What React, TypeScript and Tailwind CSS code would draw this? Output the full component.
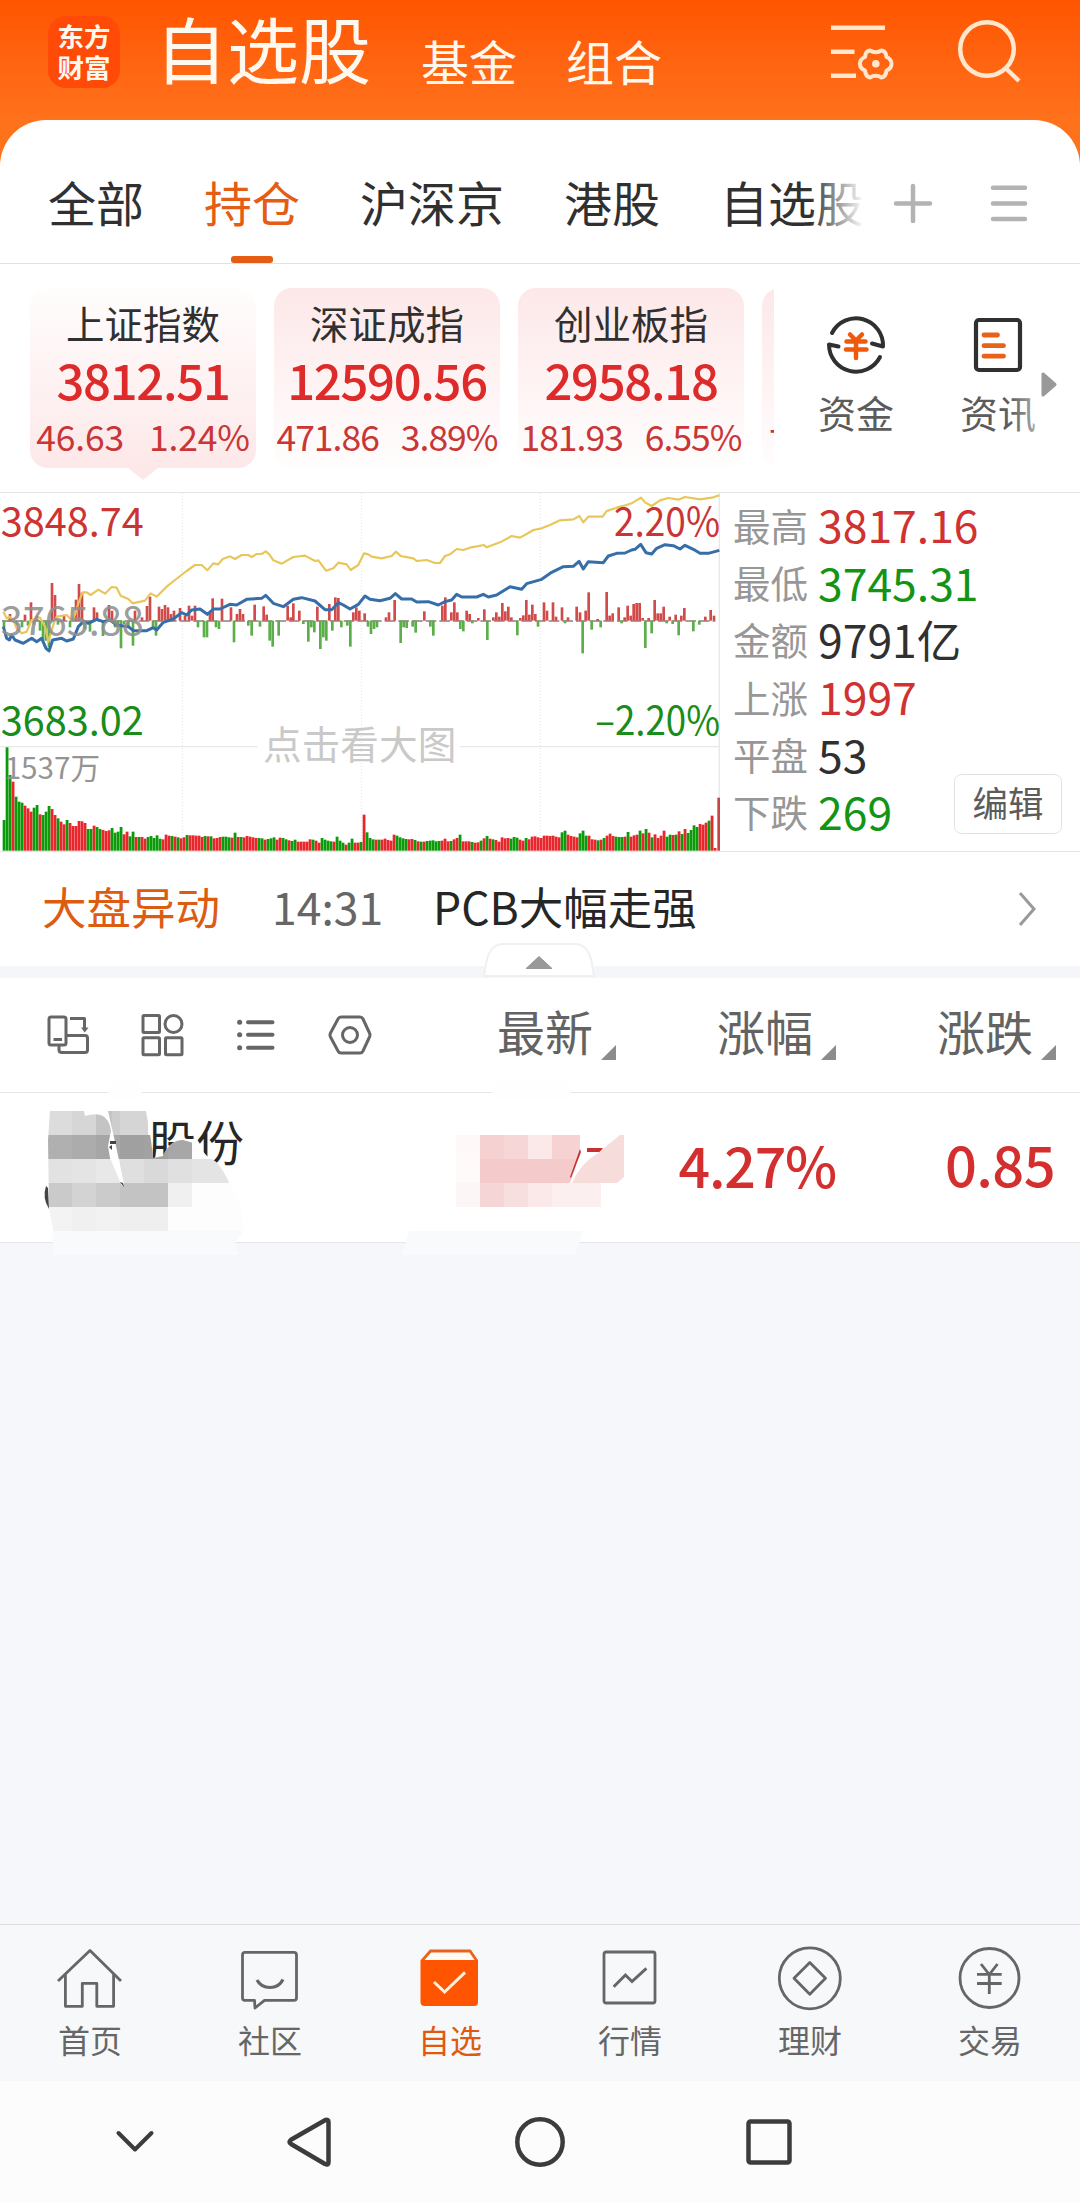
import React from "react";
import clsx from "clsx";

const tabs = ["全部", "持仓", "沪深京", "港股", "自选股"];

const indices = [
  { name: "上证指数", value: "3812.51", diff: "46.63", pct: "1.24%" },
  { name: "深证成指", value: "12590.56", diff: "471.86", pct: "3.89%" },
  { name: "创业板指", value: "2958.18", diff: "181.93", pct: "6.55%" },
];

const stats = [
  { label: "最高", value: "3817.16", color: "text-[#d03232]" },
  { label: "最低", value: "3745.31", color: "text-[#149414]" },
  { label: "金额", value: "9791亿", color: "text-[#303030]" },
  { label: "上涨", value: "1997", color: "text-[#d03232]" },
  { label: "平盘", value: "53", color: "text-[#303030]" },
  { label: "下跌", value: "269", color: "text-[#149414]" },
];

// one bar per trading minute, in chart units (3 units = 1px)
const volumes = [
  92, 310, 227, 207, 162, 147, 144, 135, 127, 117, 129, 137, 109, 107, 117, 134, 125, 107, 97, 87,
  79, 92, 83, 74, 74, 89, 88, 83, 65, 65, 75, 71, 65, 62, 59, 61, 68, 54, 57, 71,
  49, 57, 43, 57, 41, 41, 41, 36, 41, 44, 38, 46, 36, 34, 48, 45, 44, 42, 40, 37,
  40, 47, 46, 46, 45, 45, 41, 44, 43, 43, 37, 38, 41, 42, 42, 40, 39, 54, 41, 41,
  40, 44, 42, 40, 38, 38, 37, 33, 35, 37, 40, 33, 39, 38, 34, 31, 29, 33, 27, 27,
  27, 27, 34, 33, 30, 24, 38, 33, 30, 28, 27, 42, 30, 24, 18, 24, 36, 24, 24, 26,
  108, 55, 38, 34, 33, 33, 33, 36, 32, 30, 48, 45, 40, 37, 35, 34, 35, 32, 28, 27,
  27, 29, 30, 31, 28, 29, 30, 36, 28, 29, 34, 38, 48, 28, 28, 28, 26, 24, 25, 30,
  37, 44, 36, 34, 32, 27, 40, 37, 38, 36, 41, 39, 33, 30, 38, 34, 42, 43, 40, 38,
  45, 45, 44, 45, 42, 40, 55, 60, 48, 44, 42, 40, 52, 60, 45, 45, 34, 33, 31, 33,
  38, 45, 51, 44, 42, 41, 41, 42, 56, 42, 46, 48, 60, 52, 65, 54, 40, 49, 38, 45,
  60, 42, 48, 47, 48, 58, 50, 65, 53, 62, 76, 71, 80, 78, 84, 90, 105, 8,
];
const volumeColors =
  "gggrgggrrrggrgggrrgrrgrrrrrrggrggrrrgggg" +
  "rrggrgrrgggggrrrgrgrrgrrrrrgrgrrrgggrgrg" +
  "rrrrrggrgggrrggrggrrrrrgrrggggrgggrggrrg" +
  "rgggrgrrrrrggggrrgrgrgggggrrrgrrgrrrgrrg" +
  "rgrgrrrrrgggrrgrrrrrrrrrrrggrrrrgggrrrgr" +
  "grrrgggrgrrrgrgrgrrrrggrgrgrggggrrrgrr";

const momentum: [number, number][] = [
  [12, -20], [30, 20], [48, -14], [66, -20], [75, 18], [84, -15], [93, 55], [102, -12], [111, 14], [120, -30],
  [129, -62], [138, -60], [147, -80], [156, 113], [165, 77], [174, -12], [192, 14], [210, -20], [228, 63],
  [237, 110], [246, 84], [255, -25], [270, -33], [282, 40], [291, 25], [309, -46], [327, 47], [336, 30],
  [345, -20], [354, -20], [363, -83], [372, -10], [385, -20], [399, -75], [405, 30], [426, 10], [441, 44],
  [450, 72], [459, -20], [468, -45], [477, 42], [486, 35], [495, 47], [504, 40], [513, 20], [522, 30],
  [540, 38], [555, 15], [567, 45], [576, 15], [585, 45], [594, -20], [612, -50], [621, -50], [630, 25],
  [638, 67], [648, -20], [657, -25], [666, 66], [693, 40], [702, -65], [711, 20], [720, 35], [729, 20],
  [745, -15], [755, -45], [764, 48], [780, -18], [791, 43], [800, 18], [809, -60], [818, -78], [836, -45],
  [863, 45], [872, 10], [880, 52], [898, 30], [910, -10], [925, -63], [934, -20], [943, -35], [952, 42],
  [961, -85], [970, -50], [979, -60], [988, 50], [997, -30], [1006, 70], [1015, 68], [1024, -20],
  [1042, -15], [1051, -78], [1060, 25], [1069, 40], [1078, 30], [1094, 22], [1104, -18], [1113, -40],
  [1122, -25], [1131, -20], [1158, 10], [1167, 25], [1184, 62], [1202, -67], [1211, -20], [1220, -22],
  [1238, -18], [1247, -36], [1273, 28], [1291, -18], [1300, -45], [1327, 45], [1336, 70], [1354, 25],
  [1363, 55], [1372, 25], [1381, -25], [1390, -32], [1400, 30], [1409, 20], [1417, -8], [1435, 8],
  [1453, 34], [1462, -58], [1480, 10], [1489, 25], [1498, 12], [1507, 53], [1516, 28], [1525, 42],
  [1534, 10], [1552, -44], [1561, 8], [1570, 16], [1579, 62], [1588, 18], [1597, 48], [1606, 20],
  [1614, -18], [1632, 55], [1641, 30], [1659, 55], [1668, 12], [1686, 40], [1695, -8], [1704, 10],
  [1730, 42], [1740, 25], [1748, -98], [1757, 30], [1766, 85], [1775, -27], [1793, 5], [1802, -20],
  [1820, 86], [1829, 15], [1838, 22], [1856, 40], [1865, -8], [1874, 10], [1883, 45], [1892, 15],
  [1901, 50], [1910, 53], [1919, 53], [1928, 8], [1936, -82], [1946, 8], [1955, -38], [1964, 62],
  [1973, 22], [1982, 22], [1991, 42], [2000, -8], [2009, 12], [2018, -10], [2027, 18], [2036, -44],
  [2044, 15], [2053, 38], [2080, -32], [2098, -12], [2116, 12], [2132, 32], [2142, 15],
];

const averageLine =
  "10,380 20,400 28,395 40,405 50,430 65,445 80,440 95,405 120,398 135,425 145,470 160,420 170,395 200,390 215,405 225,390 235,355 248,322 260,322 272,330 295,314 315,326 335,306 350,308 362,332 385,342 398,355 435,347 452,325 470,335 500,305 525,285 560,258 585,240 605,240 622,256 640,235 655,238 668,222 690,214 705,222 725,210 745,210 755,216 770,207 785,207 797,199 808,208 820,226 845,236 880,216 915,212 945,228 955,226 978,257 1000,250 1015,233 1040,238 1052,255 1075,240 1092,205 1105,208 1115,215 1145,220 1175,213 1188,200 1202,213 1240,220 1250,228 1280,225 1305,234 1320,234 1335,213 1350,208 1370,192 1390,195 1410,188 1452,180 1460,187 1500,172 1535,153 1560,158 1580,147 1600,135 1625,130 1650,120 1680,106 1720,103 1738,93 1750,112 1765,95 1808,95 1820,78 1850,68 1880,60 1895,55 1923,38 1935,52 1955,63 1980,46 2005,39 2035,44 2055,36 2100,43 2140,37 2158,31";
const priceLine =
  "10,425 20,460 28,465 35,450 45,465 70,475 95,460 110,470 125,460 138,490 147,498 158,465 185,460 200,468 220,462 235,425 250,410 265,415 290,403 310,410 330,405 350,420 385,425 400,437 440,437 460,428 470,435 490,412 520,402 545,383 560,390 575,375 600,372 622,388 640,372 660,372 690,358 710,360 740,343 785,340 797,331 820,355 850,365 880,343 905,338 945,348 975,374 995,374 1015,353 1030,360 1050,372 1075,358 1095,333 1110,343 1140,347 1170,340 1186,326 1205,342 1235,342 1250,351 1285,350 1315,360 1335,350 1355,345 1370,328 1385,336 1430,336 1450,328 1465,336 1490,330 1530,305 1565,313 1580,296 1625,283 1655,262 1690,245 1720,244 1737,229 1750,252 1765,230 1810,233 1825,213 1850,205 1875,204 1895,195 1905,193 1922,178 1938,203 1955,207 1970,190 1995,179 2020,182 2040,192 2055,181 2080,193 2100,205 2125,205 2158,196";

const columns = ["最新", "涨幅", "涨跌"];

// [x, y, width, height, fill]
const nameTiles: [number, number, number, number, string][] = [
  [48, 31, 24, 24, "#dcdcdc"], [72, 31, 24, 24, "#d6d6d6"], [96, 31, 16, 24, "#c4c4c4"],
  [112, 31, 8, 24, "#cdcdcd"], [120, 31, 28, 24, "#d5d5d5"],
  [48, 55, 24, 24, "#b0b0b0"], [72, 55, 24, 24, "#acacac"], [96, 55, 24, 24, "#a6a6a6"],
  [120, 55, 24, 24, "#a0a0a0"], [144, 55, 24, 24, "#a2a2a2"], [168, 55, 24, 24, "#a7a7a7"],
  [48, 79, 24, 24, "#e2e2e2"], [72, 79, 24, 24, "#e4e4e4"], [96, 79, 24, 24, "#e8e8e8"],
  [120, 79, 24, 24, "#dfdfdf"], [144, 79, 24, 24, "#d9d9d9"], [168, 79, 24, 24, "#e0e0e0"],
  [192, 79, 40, 24, "#e4e4e4"],
  [48, 103, 24, 24, "#cacaca"], [72, 103, 24, 24, "#d3d3d3"], [96, 103, 24, 24, "#cbcbcb"],
  [120, 103, 48, 24, "#c3c3c3"], [168, 103, 24, 24, "#f0f0f0"],
  [48, 127, 24, 24, "#f3f3f3"], [72, 127, 24, 24, "#f0f0f0"], [96, 127, 24, 24, "#f2f2f2"],
  [120, 127, 48, 24, "#efefef"],
  [48, 151, 200, 24, "#f9fafc"],
];
const priceTiles: [number, number, number, number, string][] = [
  [456, 55, 24, 24, "#fef8f8"], [480, 55, 24, 24, "#f5d1d1"], [504, 55, 24, 24, "#f6d6d6"],
  [528, 55, 24, 24, "#fbe9e9"], [552, 55, 28, 24, "#f6d2d2"],
  [456, 79, 24, 24, "#fefafa"], [480, 79, 96, 24, "#f4caca"],
  [456, 103, 24, 24, "#fdf6f6"], [480, 103, 24, 24, "#f5d5d5"], [504, 103, 24, 24, "#f8dfdf"],
  [528, 103, 24, 24, "#fbe8e8"], [552, 103, 49, 24, "#fbefef"],
];

function Header() {
  return (
    <div className="flex h-[166px] items-start bg-linear-to-b from-[#ff5500] to-[#ff721c] to-75% pl-12 text-[#fff8ee]">
      <div className="mt-4 flex size-[72px] flex-col items-center rounded-[18px] bg-[#ff4a08] pt-[4px] text-[26.500px] leading-[31px] font-bold">
        <span>东方</span>
        <span>财富</span>
      </div>
      <div className="mt-[11px] ml-[35px] text-[72px] leading-none">自选股</div>
      <div className="mt-[36px] ml-[50px] text-5xl leading-none">基金</div>
      <div className="mt-[36px] ml-[49px] text-5xl leading-none">组合</div>
      <svg className="mt-5 ml-[167px]" width="66" height="64" viewBox="0 0 66 64" fill="none" stroke="#ffe6cc" strokeWidth="4.5">
        <path d="M2 7.7h54M2 31.7h23.5M2 55.7h25" />
        <path
          strokeWidth="4"
          strokeLinejoin="round"
          d="M41 30.5Q46.7 34 52.5 30.5Q57 31 57.5 37Q62.5 39 62.5 43.7Q62.5 48.5 57.5 50.5Q57 56.5 52.5 57.5Q46.7 54 41 57.5Q36.5 56.5 36 50.5Q31 48.5 31 43.7Q31 39 36 37Q36.5 31 41 30.5Z"
        />
        <circle cx="46.8" cy="43.7" r="3.8" fill="#ffe6cc" stroke="none" />
      </svg>
      <svg className="mt-[18px] ml-[61px]" width="66" height="66" viewBox="0 0 66 66" fill="none" stroke="#ffe6cc" strokeWidth="4.5">
        <circle cx="31" cy="31" r="26.8" />
        <path d="M49 49.5L63 63" />
      </svg>
    </div>
  );
}

function Tabs() {
  return (
    <div className="relative flex h-[144px] items-start border-b border-[#e2e2e2] pl-12">
      <div className="flex w-[814px] gap-[60px] overflow-hidden pt-[57px] text-5xl leading-none whitespace-nowrap text-[#303030]">
        {tabs.map((tab, idx) => (
          <div key={tab} className={clsx("relative h-[86px] shrink-0", idx === 1 && "text-[#e55c14]")}>
            {tab}
            {idx === 1 && <div className="absolute bottom-0 left-[27px] h-[7px] w-[42px] rounded-[3px] bg-[#e55c14]" />}
          </div>
        ))}
      </div>
      <div className="absolute top-10 left-[810px] h-20 w-[54px] bg-linear-to-r from-white/0 to-white" />
      <svg className="mt-[63px] ml-[31px]" width="40" height="40" viewBox="0 0 40 40" stroke="#b3b3b3" strokeWidth="4.5" strokeLinecap="round">
        <path d="M3 20.5h34M20 3v35" />
      </svg>
      <svg className="mt-[63px] ml-[57px]" width="38" height="40" viewBox="0 0 38 40" stroke="#b3b3b3" strokeWidth="4.5" strokeLinecap="round">
        <path d="M3 4.7h32M3 20.5h32M3 36h32" />
      </svg>
    </div>
  );
}

function IndexCards() {
  return (
    <div className="flex h-[228px] pt-6">
      <div className="flex h-[195px] w-[774px] gap-[18px] overflow-hidden pl-[30px]">
        {indices.map((item, idx) => (
          <div
            key={item.name}
            className={clsx(
              "relative flex h-[180px] w-[226px] shrink-0 flex-col items-center rounded-[18px] whitespace-nowrap",
              idx === 0 ? "bg-linear-to-b from-[#fffdfd] to-[#fde8e9]" : "bg-linear-to-b from-[#fde8e9] to-[#fffdfd]",
            )}
          >
            <div className="mt-[14px] text-[38.500px] leading-[40px] text-[#303030]">{item.name}</div>
            <div className="mt-[12px] text-[49px] leading-[50px] font-medium tracking-[-1.300px] text-[#dd2a2a]">{item.value}</div>
            <div
              className={clsx(
                "mt-[12px] flex text-[35.500px] leading-[40px] text-[#c93636]",
                idx === 0 ? "gap-[25px] tracking-[-0.200px]" : "gap-[22px] tracking-[-1px]",
              )}
            >
              <span>{item.diff}</span>
              <span>{item.pct}</span>
            </div>
            {idx === 0 && (
              <svg className="absolute top-[180px] left-[98px]" width="30" height="12" viewBox="0 0 30 12">
                <path d="M0 0H30L15 12Z" fill="#fde8e9" />
              </svg>
            )}
          </div>
        ))}
        <div className="flex h-[180px] w-[226px] shrink-0 items-end rounded-[18px] bg-linear-to-b from-[#fde8e9] to-[#fffdfd] pb-[8px] pl-[7px] text-[35.500px] leading-[40px] text-[#c93636]">
          7.55
        </div>
      </div>
      <div className="ml-[44px] flex w-[76px] flex-col items-center pt-[26px]">
        <svg width="62" height="62" viewBox="0 0 62 62" fill="none" stroke="#303030" strokeWidth="4" strokeLinecap="round" strokeLinejoin="round">
          <path d="M7 19A27 27 0 0 1 58 32.5L47 29.5" />
          <path d="M55 43A27 27 0 0 1 4 30.5L13.5 32.5" />
          <path d="M25 20.5L31 26.5L37 20.5M31 26V44M21.5 27.5H40.5M21 35.5H41.5" stroke="#f0590c" strokeWidth="4.5" />
        </svg>
        <div className="mt-[17px] text-[38px] leading-[38px] whitespace-nowrap text-[#5c5c5c]">资金</div>
      </div>
      <div className="relative ml-[65px] flex w-[78px] flex-col items-center pt-[28px]">
        <svg width="50" height="58" viewBox="0 0 50 58" fill="none" stroke="#303030" strokeWidth="4.2" strokeLinecap="round">
          <rect x="3" y="4" width="44" height="50" rx="3" />
          <path d="M11 19h13.500M11 29.7h19.500M11 40.2h19.500" stroke="#e8621a" strokeWidth="4.8" />
        </svg>
        <div className="mt-[19px] text-[38px] leading-[38px] whitespace-nowrap text-[#5c5c5c]">资讯</div>
        <div className="absolute right-0 bottom-9 h-20 w-7 bg-linear-to-r from-white/0 to-white/50" />
      </div>
      <svg className="mt-[84px] ml-[4px]" width="16" height="25" viewBox="0 0 16 25">
        <path d="M2 2V23L14 12.5Z" fill="#999" stroke="#999" strokeWidth="3" strokeLinejoin="round" />
      </svg>
    </div>
  );
}

function Chart() {
  return (
    <svg width="720" height="358" viewBox="0 24 2160 1074" className="shrink-0">
      <g stroke="#e4e4e4" strokeWidth="3" strokeDasharray="3 6">
        <path d="M547 24V1098M1084 24V1098M1621 24V1098" />
      </g>
      <path d="M0 785H772M1380 785H2160M2158 24V1098" stroke="#e8e8e8" strokeWidth="4" />
      <path d="M6 408H2146" stroke="#8d7d7d" strokeWidth="4" strokeDasharray="32 9" />
      {momentum.map(([x, v]) => (
        <rect key={x} x={x - 4} y={v > 0 ? 407 - v : 407} width="8" height={Math.abs(v)} fill={v > 0 ? "#d24b4b" : "#5cae49"} />
      ))}
      {volumes.map((v, i) => (
        <rect key={i} x={8 + i * 9} y={1097 - v} width="8.4" height={v} fill={volumeColors[i] === "g" ? "#0a9a0a" : "#e8262b"} />
      ))}
      <rect x="2152" y="938" width="8" height="159" fill="#c94444" />
      <polyline points={averageLine} fill="none" stroke="#e8c659" strokeWidth="6.5" strokeLinejoin="round" />
      <polyline points={priceLine} fill="none" stroke="#356ea8" strokeWidth="9" strokeLinejoin="round" />
      <g fontSize="119">
        <text x="2" y="154" fill="#cb3434">3848.74</text>
        <text x="2" y="450" fill="#8f8f8f" fillOpacity="0.9">3765.88</text>
        <text x="2" y="750" fill="#198c19">3683.02</text>
        <text x="2160" y="154" fill="#cb3434" textAnchor="end" textLength="318" lengthAdjust="spacingAndGlyphs">2.20%</text>
        <text x="2160" y="750" fill="#198c19" textAnchor="end" textLength="374" lengthAdjust="spacingAndGlyphs">–2.20%</text>
      </g>
      <text x="14" y="881" fontSize="89" fill="#949494">1537万</text>
      <text x="1079" y="822" fontSize="116" fill="#c9c9c9" textAnchor="middle">点击看大图</text>
    </svg>
  );
}

function Market() {
  return (
    <div className="flex h-[360px] border-y border-[#e4e4e4]">
      <Chart />
      <div className="relative flex-1 pt-[3px] pl-[13px]">
        {stats.map((row) => (
          <div key={row.label} className="flex h-[57.300px] items-center">
            <span className="w-[85px] text-[37.500px] leading-none text-[#979797]">{row.label}</span>
            <span className={clsx("text-[44.500px] leading-none", row.color)}>{row.value}</span>
          </div>
        ))}
        <div className="absolute top-[281px] left-[234px] flex h-[60px] w-[108px] items-center justify-center rounded-lg border border-[#e2e2e2] pb-[4px] text-[35.500px] leading-none text-[#5c5c5c]">
          编辑
        </div>
      </div>
    </div>
  );
}

function News() {
  return (
    <div className="relative flex h-[126px] items-start border-b-[12px] border-[#f5f6f9] pt-[32px] pl-[42px] text-[44.500px] leading-none whitespace-nowrap">
      <span className="text-[#dc5c12]">大盘异动</span>
      <span className="ml-[52px] w-[112px] text-[#666]">14:31</span>
      <span className="ml-[49px] text-[#262626]">PCB大幅走强</span>
      <svg className="absolute top-[38px] right-[43px]" width="20" height="38" viewBox="0 0 20 38" fill="none" stroke="#999" strokeWidth="3">
        <path d="M3 3L17 19L3 35" />
      </svg>
      <svg className="absolute top-[90px] left-[483px]" width="112" height="36" viewBox="0 0 112 36">
        <path d="M1 34C3 24 3 2 20 2H92C109 2 109 24 111 34Z" fill="#fff" stroke="#f0f0f2" strokeWidth="2" />
        <path d="M43 26.5L56 14.5L69 26.5Z" fill="#999" stroke="#999" strokeLinejoin="round" />
      </svg>
    </div>
  );
}

function TableHead() {
  return (
    <div className="flex h-[115px] items-start border-b border-[#e6e6e6]">
      <div className="flex gap-[42px] pt-[30px] pl-11">
        <svg width="52" height="52" viewBox="0 0 52 52" fill="none" stroke="#666" strokeWidth="3" strokeLinejoin="round">
          <rect x="5" y="9" width="17" height="28" rx="2" />
          <path d="M9.5 31.5H18M26 10.5H40.5V22" />
          <path d="M37 19.5H44.5L40.7 24.5Z" fill="#666" stroke="none" />
          <path d="M22 27.5H41Q43.5 27.5 43.5 30V42Q43.5 44.5 41 44.5H18Q15 44.5 15 42V37" />
        </svg>
        <svg width="52" height="52" viewBox="0 0 52 52" fill="none" stroke="#666" strokeWidth="3">
          <rect x="5" y="7.5" width="16.5" height="17" rx="1" />
          <circle cx="35.5" cy="16" r="8.5" />
          <rect x="5" y="29.7" width="16.5" height="17" rx="1" />
          <rect x="27.5" y="29.7" width="16.5" height="17" rx="1" />
        </svg>
        <svg width="52" height="52" viewBox="0 0 52 52" fill="none" stroke="#666" strokeWidth="4" strokeLinecap="round">
          <path d="M16 14.2H40.500M16 26.8H40.500M16 39.8H40.500" />
          <path d="M7.600 14.2h.1M7.600 26.8h.1M7.600 39.8h.1" strokeWidth="5" />
        </svg>
        <svg width="52" height="52" viewBox="0 0 52 52" fill="none" stroke="#666" strokeWidth="3" strokeLinejoin="round">
          <path d="M15 9H34Q36 9 37 11L43.500 25Q44.500 27 43.500 29L37 43Q36 45 34 45H15Q13 45 12 43L4.5 29Q3.5 27 4.5 25L12 11Q13 9 15 9Z" />
          <circle cx="24" cy="27" r="7.5" />
        </svg>
      </div>
      <div className="flex gap-[101px] pt-[28px] pl-[119px]">
        {columns.map((col) => (
          <div key={col} className="flex items-start text-5xl leading-none whitespace-nowrap text-[#636363]">
            {col}
            <svg className="mt-[39px] ml-[8px]" width="15" height="15" viewBox="0 0 15 15">
              <path d="M15 0V15H0Z" fill="#8c8c90" />
            </svg>
          </div>
        ))}
      </div>
    </div>
  );
}

function HoldingRow() {
  return (
    <div className="relative flex h-[150px] items-start border-b border-[#e6e7ea] leading-none whitespace-nowrap">
      <div className="pt-[23px] pl-[148px] text-5xl text-[#262626]">股份</div>
      <div className="w-[592px] pt-[44px] text-right text-[55.500px] font-medium tracking-[-1.200px] text-[#d42f2f]">4.27%</div>
      <div className="w-[219px] pt-[42px] text-right text-[56px] font-medium tracking-[-0.600px] text-[#d42f2f]">0.85</div>
      {/* blurred out name and price */}
      <svg className="absolute top-[-13px] left-0" width="640" height="190" viewBox="0 0 640 190">
        <defs>
          <clipPath id="name">
            <path d="M50 31H84L85 36Q108 29 111 51L108 66L110 78L122 106L124 104L116 66L108 31H146L151 60L153 78L163 76Q170 60 183 60Q196 62 207 76L216 82Q224 90 229 103Q243 124 244 150L235 163L238 175H53V150L49 128L48 60Z" />
          </clipPath>
        </defs>
        <path d="M108 20V6Q114 -4 125 -4Q138 -4 142 8V20ZM492 20V8Q500 -2 504 -6H565L570 8V20Z" fill="#fefefe" />
        <g clipPath="url(#name)">
          <rect x="48" y="31" width="200" height="144" fill="#fdfdfd" />
          {nameTiles.map(([x, y, w, h, fill]) => (
            <rect key={`${x}-${y}`} x={x} y={y} width={w} height={h} fill={fill} />
          ))}
        </g>
        <path d="M46 106Q42 118 49 129L48 108ZM110 61H116V64H110ZM109 67L112 65V70ZM120 102L124 107L123 103Z" fill="#444" />
        <path d="M402 175L409 151H583L575 175Z" fill="#f9fafc" />
        {priceTiles.map(([x, y, w, h, fill]) => (
          <rect key={`${x}-${y}`} x={x} y={y} width={w} height={h} fill={fill} />
        ))}
        <path d="M580 55L581 72L570 103L576 103L590 79L580 79Z" fill="#fff" />
        <path d="M576 79H577L570 100Z" fill="#f4caca" />
        <path d="M587 68H603L600 72H587ZM580 69L581 72L571 98L570 97Z" fill="#c53232" />
        <path d="M620 55H624V97L617 103H572Q580 84 598 73Z" fill="#f7dcdc" />
      </svg>
    </div>
  );
}

function NavItem({ label, active, children }: { label: string; active?: boolean; children: React.ReactNode }) {
  return (
    <div className={clsx("flex w-[180px] flex-col items-center pt-[18px]", active ? "text-[#e0590f]" : "text-[#666]")}>
      <svg width="70" height="70" viewBox="0 0 70 70" fill="none" stroke="currentColor" strokeWidth="2.8">
        {children}
      </svg>
      <div className="mt-[10px] text-[32px] leading-none">{label}</div>
    </div>
  );
}

function BottomNav() {
  return (
    <div className="flex h-[157px] border-t border-[#dedee0] bg-[#f7f8fa]">
      <NavItem label="首页">
        <path d="M3 38L35 7.5L66 38M10.4 31V63.3H27.3V40.3H41.8V63.3H58.6V31" strokeLinejoin="round" />
      </NavItem>
      <NavItem label="社区">
        <path d="M10 9.3H59Q61.5 9.3 61.5 12V55Q61.5 57.3 59 57.3H29.5L20 65L19.5 57.3H10Q7.5 57.3 7.5 55V12Q7.5 9.3 10 9.3Z" strokeLinejoin="round" />
        <path d="M22 37Q26 44.5 35 44.5Q44 44.5 48 36.5" strokeWidth="3.2" />
      </NavItem>
      <NavItem label="自选" active>
        <path d="M6.8 18L15.5 8H55L62 18" fill="#fffaf4" stroke="#e8641c" />
        <path d="M5.5 17H63V59Q63 63 59 63H9.5Q5.5 63 5.5 59Z" fill="#ff5500" stroke="none" />
        <path d="M19 39L29.6 49L50 29.3" stroke="#fff1de" strokeWidth="3" />
      </NavItem>
      <NavItem label="行情">
        <rect x="9" y="9" width="51" height="51" rx="2" />
        <path d="M18.7 43.7L30.4 32L37 38.5L51.4 25.3" strokeWidth="3" />
      </NavItem>
      <NavItem label="理财">
        <circle cx="34.8" cy="35.3" r="30.5" />
        <path d="M34.8 19.5L50.5 35.3L34.8 51.2L19 35.3Z" strokeLinejoin="round" />
      </NavItem>
      <NavItem label="交易">
        <circle cx="34.5" cy="35" r="29.5" />
        <path d="M26 21L34.3 31.5L42.5 21M22 31.3H46.7M22 40.5H46.7M34.3 31V51" />
      </NavItem>
    </div>
  );
}

function SystemNav() {
  return (
    <div className="flex h-[122px] items-start bg-[#fcfcfc] pt-[33px]">
      <svg className="ml-[110px]" width="50" height="56" viewBox="0 0 50 56" fill="none" stroke="#3c3c3c" strokeWidth="4" strokeLinecap="round" strokeLinejoin="round">
        <path d="M8.5 19L25 35.5L41.5 19" />
      </svg>
      <svg className="ml-[124px]" width="50" height="56" viewBox="0 0 50 56" fill="none" stroke="#3c3c3c" strokeWidth="4.5" strokeLinejoin="round">
        <path d="M7 25.8L41 6.2Q44.5 5 44.5 8V48.5Q44.5 51.5 41 50L7 30Q4 28 7 25.8Z" />
      </svg>
      <svg className="ml-[178px]" width="56" height="56" viewBox="0 0 56 56" fill="none" stroke="#3c3c3c" strokeWidth="4.5">
        <circle cx="28" cy="28" r="22.7" />
      </svg>
      <svg className="ml-[173px]" width="56" height="56" viewBox="0 0 56 56" fill="none" stroke="#3c3c3c" strokeWidth="4.5">
        <rect x="7.500" y="7.500" width="41" height="41" rx="2" />
      </svg>
    </div>
  );
}

export default function App() {
  return (
    <div className="flex h-[2203px] w-[1080px] flex-col overflow-hidden bg-[#f6f7fa] font-['Noto_Sans_CJK_SC',sans-serif]">
      <Header />
      <div className="-mt-[46px] rounded-t-[46px] bg-white">
        <Tabs />
        <IndexCards />
        <Market />
        <News />
        <TableHead />
        <HoldingRow />
      </div>
      <div className="flex-1" />
      <BottomNav />
      <SystemNav />
    </div>
  );
}
